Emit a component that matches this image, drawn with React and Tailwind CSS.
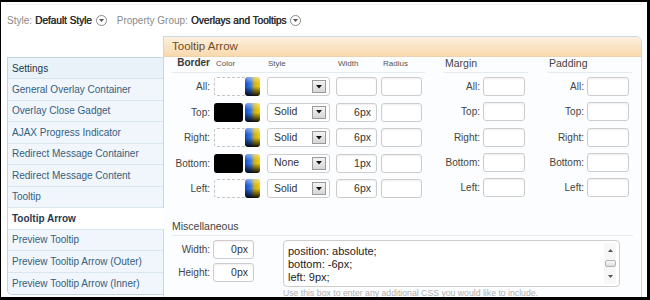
import React from "react";

const sideItems = [
  "General Overlay Container",
  "Overlay Close Gadget",
  "AJAX Progress Indicator",
  "Redirect Message Container",
  "Redirect Message Content",
  "Tooltip",
  "Tooltip Arrow",
  "Preview Tooltip",
  "Preview Tooltip Arrow (Outer)",
  "Preview Tooltip Arrow (Inner)",
];

const borderRows = [
  { label: "All:", filled: false, style: "", width: "" },
  { label: "Top:", filled: true, style: "Solid", width: "6px" },
  { label: "Right:", filled: false, style: "Solid", width: "6px" },
  { label: "Bottom:", filled: true, style: "None", width: "1px" },
  { label: "Left:", filled: false, style: "Solid", width: "6px" },
];

const boxLabels = ["All:", "Top:", "Right:", "Bottom:", "Left:"];

function CircleArrow() {
  return (
    <span className="inline-flex w-[11px] h-[11px] rounded-full border border-[#8a8a8a] bg-white items-center justify-center">
      <svg width="5" height="3" viewBox="0 0 5 3">
        <path d="M0 0 L5 0 L2.5 3 Z" fill="#555" />
      </svg>
    </span>
  );
}

function TextBox({ value, w = "w-[41px]" }) {
  return (
    <div
      className={`${w} h-[19px] border border-[#cdcdcd] rounded-[3px] bg-white text-right pr-[5px] text-[10.5px] leading-[17px] text-[#333] shadow-[inset_0_1px_2px_rgba(0,0,0,0.07)]`}
    >
      {value}
    </div>
  );
}

function PickerIcon() {
  return (
    <div className="w-[15px] h-[19px] rounded-[3px] shrink-0 bg-[linear-gradient(to_bottom,rgba(255,255,255,0.45)_0%,transparent_35%,transparent_50%,rgba(0,0,0,0.92)_100%),linear-gradient(to_right,#0d4cc8_0%,#3b7be0_40%,#c9b020_62%,#f6cc00_100%)]" />
  );
}

function ColorBox({ filled }) {
  if (filled) {
    return (
      <div className="w-[46px] h-[19px] flex justify-between">
        <div className="w-[29px] h-[19px] bg-black rounded-[3px]" />
        <PickerIcon />
      </div>
    );
  }
  return (
    <div className="w-[46px] h-[19px] flex justify-end border border-dashed border-[#c4c4c4] rounded-[3px] bg-white">
      <div className="-my-[1px] -mr-[1px]">
        <PickerIcon />
      </div>
    </div>
  );
}

function SelectBox({ value }) {
  return (
    <div className="w-[63px] h-[19px] border border-[#cdcdcd] rounded-[3px] bg-white flex items-center justify-between pl-[6px] pr-[3px]">
      <span className="text-[10.5px] text-[#333]">{value}</span>
      <div className="w-[14px] h-[13px] border border-[#9a9a9a] bg-[linear-gradient(to_bottom,#f4f4f4,#d6d6d6)] flex items-center justify-center">
        <svg width="6" height="4" viewBox="0 0 6 4">
          <path d="M0 0 L6 0 L3 3.5 Z" fill="#111" />
        </svg>
      </div>
    </div>
  );
}

function BoxSection({ title }) {
  return (
    <div className="w-[84px]">
      <div className="h-[16px] border-b border-[#e3eaf0] flex items-end pb-[3px] pl-[1px]">
        <span className="text-[10.5px] leading-[12px] text-[#444]">{title}</span>
      </div>
      <div className="mt-[4px] flex flex-col gap-[6.3px]">
        {boxLabels.map((l) => (
          <div key={l} className="flex items-center h-[19px]">
            <div className="w-[36px] text-right text-[10px] text-[#444]">{l}</div>
            <div className="ml-[3px]">
              <TextBox value="" w="w-[42px]" />
            </div>
          </div>
        ))}
      </div>
    </div>
  );
}

export default function App() {
  return (
    <div className="w-[650px] h-[300px] overflow-hidden bg-black pt-[2px] pl-[1px] pr-[3px] pb-[3px] font-['Liberation_Sans',Arial,sans-serif]">
      <div className="w-full h-full bg-white overflow-hidden">
        <div className="h-[3px] mx-[6px] border-b border-[#eef2f5]" />
        {/* top bar */}
        <div className="h-[31px] flex items-center pl-[6px] text-[10px]">
          <span className="text-[#8a8a8a]">Style:</span>
          <span className="ml-[3px] text-[#2a2a2a] [text-shadow:0.45px_0_0_#2a2a2a]">Default Style</span>
          <span className="ml-[4px] flex">
            <CircleArrow />
          </span>
          <span className="ml-[10px] text-[#8a8a8a]">Property Group:</span>
          <span className="ml-[3px] text-[#2a2a2a] [text-shadow:0.45px_0_0_#2a2a2a]">Overlays and Tooltips</span>
          <span className="ml-[4px] flex">
            <CircleArrow />
          </span>
        </div>

        <div className="flex items-start pl-[6px] pr-[5px]">
          {/* sidebar */}
          <div className="relative z-10 w-[156px] mt-[21px] border border-r-0 border-[#c3d5e4] rounded-bl-[5px] bg-[#f0f6fb]">
            <div className="h-[21px] border-b border-[#d6e3ee] pl-[4px] flex items-center text-[10px] text-[#22384c] bg-[#eaf2f9]">
              Settings
            </div>
            {sideItems.map((it, i) => {
              const sel = it === "Tooltip Arrow";
              const last = i === sideItems.length - 1;
              return (
                <div
                  key={it}
                  className={`h-[21.5px] pl-[4px] flex items-center text-[10px] ${
                    last ? "" : "border-b border-[#d9e5ef]"
                  } ${
                    sel
                      ? "bg-white -mr-[1px] font-bold text-[#1f3a55]"
                      : "text-[#35607f]"
                  }`}
                >
                  {it}
                </div>
              );
            })}
          </div>

          {/* main panel */}
          <div className="flex-1 h-[280px] border border-[#c8d8e4] rounded-tr-[6px] bg-[#fcfdfe]">
            <div className="h-[20px] rounded-tr-[5px] bg-[linear-gradient(to_bottom,#fdf0df,#f8d9ad)] border-b border-[#ecd3ad] flex items-center pl-[8px]">
              <span className="text-[11.5px] text-[#6e4c28]">Tooltip Arrow</span>
            </div>

            <div className="pl-[8px]">
              <div className="flex">
                {/* Border section */}
                <div className="w-[253px]">
                  <div className="h-[16px] border-b border-[#e3eaf0] flex items-end pb-[3px]">
                    <div className="w-[38px] text-right text-[10px] leading-[12px] font-bold text-[#3a3a3a]">
                      Border
                    </div>
                    <div className="ml-[4px] w-[46px] pl-[2px] text-[8px] leading-[10px] text-[#555]">Color</div>
                    <div className="ml-[7px] w-[63px] pl-[1px] text-[8px] leading-[10px] text-[#555]">Style</div>
                    <div className="ml-[6px] w-[41px] pl-[2px] text-[8px] leading-[10px] text-[#555]">Width</div>
                    <div className="ml-[4px] w-[41px] pl-[2px] text-[8px] leading-[10px] text-[#555]">Radius</div>
                  </div>
                  <div className="mt-[4px] flex flex-col gap-[6.5px]">
                    {borderRows.map((r) => (
                      <div key={r.label} className="flex items-center h-[19px]">
                        <div className="w-[38px] text-right text-[10px] text-[#444]">{r.label}</div>
                        <div className="ml-[4px]">
                          <ColorBox filled={r.filled} />
                        </div>
                        <div className="ml-[7px]">
                          <SelectBox value={r.style} />
                        </div>
                        <div className="ml-[6px]">
                          <TextBox value={r.width} />
                        </div>
                        <div className="ml-[4px]">
                          <TextBox value="" />
                        </div>
                      </div>
                    ))}
                  </div>
                </div>

                <div className="ml-[19px]">
                  <BoxSection title="Margin" />
                </div>
                <div className="ml-[20px]">
                  <BoxSection title="Padding" />
                </div>
              </div>

              {/* Miscellaneous */}
              <div className="mt-[22px] mr-[8px] h-[16px] border-b border-[#e3eaf0] flex items-end pb-[3px]">
                <span className="text-[10.5px] leading-[12px] text-[#444]">Miscellaneous</span>
              </div>
              <div className="mt-[4px] flex">
                <div className="flex flex-col gap-[4px]">
                  <div className="flex items-center h-[19px]">
                    <div className="w-[38px] text-right text-[10px] text-[#444]">Width:</div>
                    <div className="ml-[3px]">
                      <TextBox value="0px" />
                    </div>
                  </div>
                  <div className="flex items-center h-[19px]">
                    <div className="w-[38px] text-right text-[10px] text-[#444]">Height:</div>
                    <div className="ml-[3px]">
                      <TextBox value="0px" />
                    </div>
                  </div>
                </div>
                <div className="ml-[29px]">
                  <div className="w-[337px] h-[47px] border border-[#cdcdcd] rounded-[4px] bg-white flex">
                    <div className="flex-1 pl-[4px] pt-[4px] text-[11px] leading-[13px] text-[#222]">
                      <div>position: absolute;</div>
                      <div>bottom: -6px;</div>
                      <div>left: 9px;</div>
                    </div>
                    <div className="w-[12px] mr-[3px] my-[2px] bg-[#f7f7f7] flex flex-col items-center justify-between py-[6px]">
                      <svg width="5" height="3" viewBox="0 0 5 3">
                        <path d="M0 3 L5 3 L2.5 0 Z" fill="#555" />
                      </svg>
                      <div className="w-[11px] h-[7px] rounded-[2px] border border-[#b4b4b4] bg-[linear-gradient(to_bottom,#fafafa,#dcdcdc)]" />
                      <svg width="5" height="3" viewBox="0 0 5 3">
                        <path d="M0 0 L5 0 L2.5 3 Z" fill="#555" />
                      </svg>
                    </div>
                  </div>
                  <div className="mt-[1px] text-[8.7px] leading-[10px] text-[#b0b0b0] whitespace-nowrap">
                    Use this box to enter any additional CSS you would like to include.
                  </div>
                </div>
              </div>
            </div>
          </div>
        </div>
      </div>
    </div>
  );
}
